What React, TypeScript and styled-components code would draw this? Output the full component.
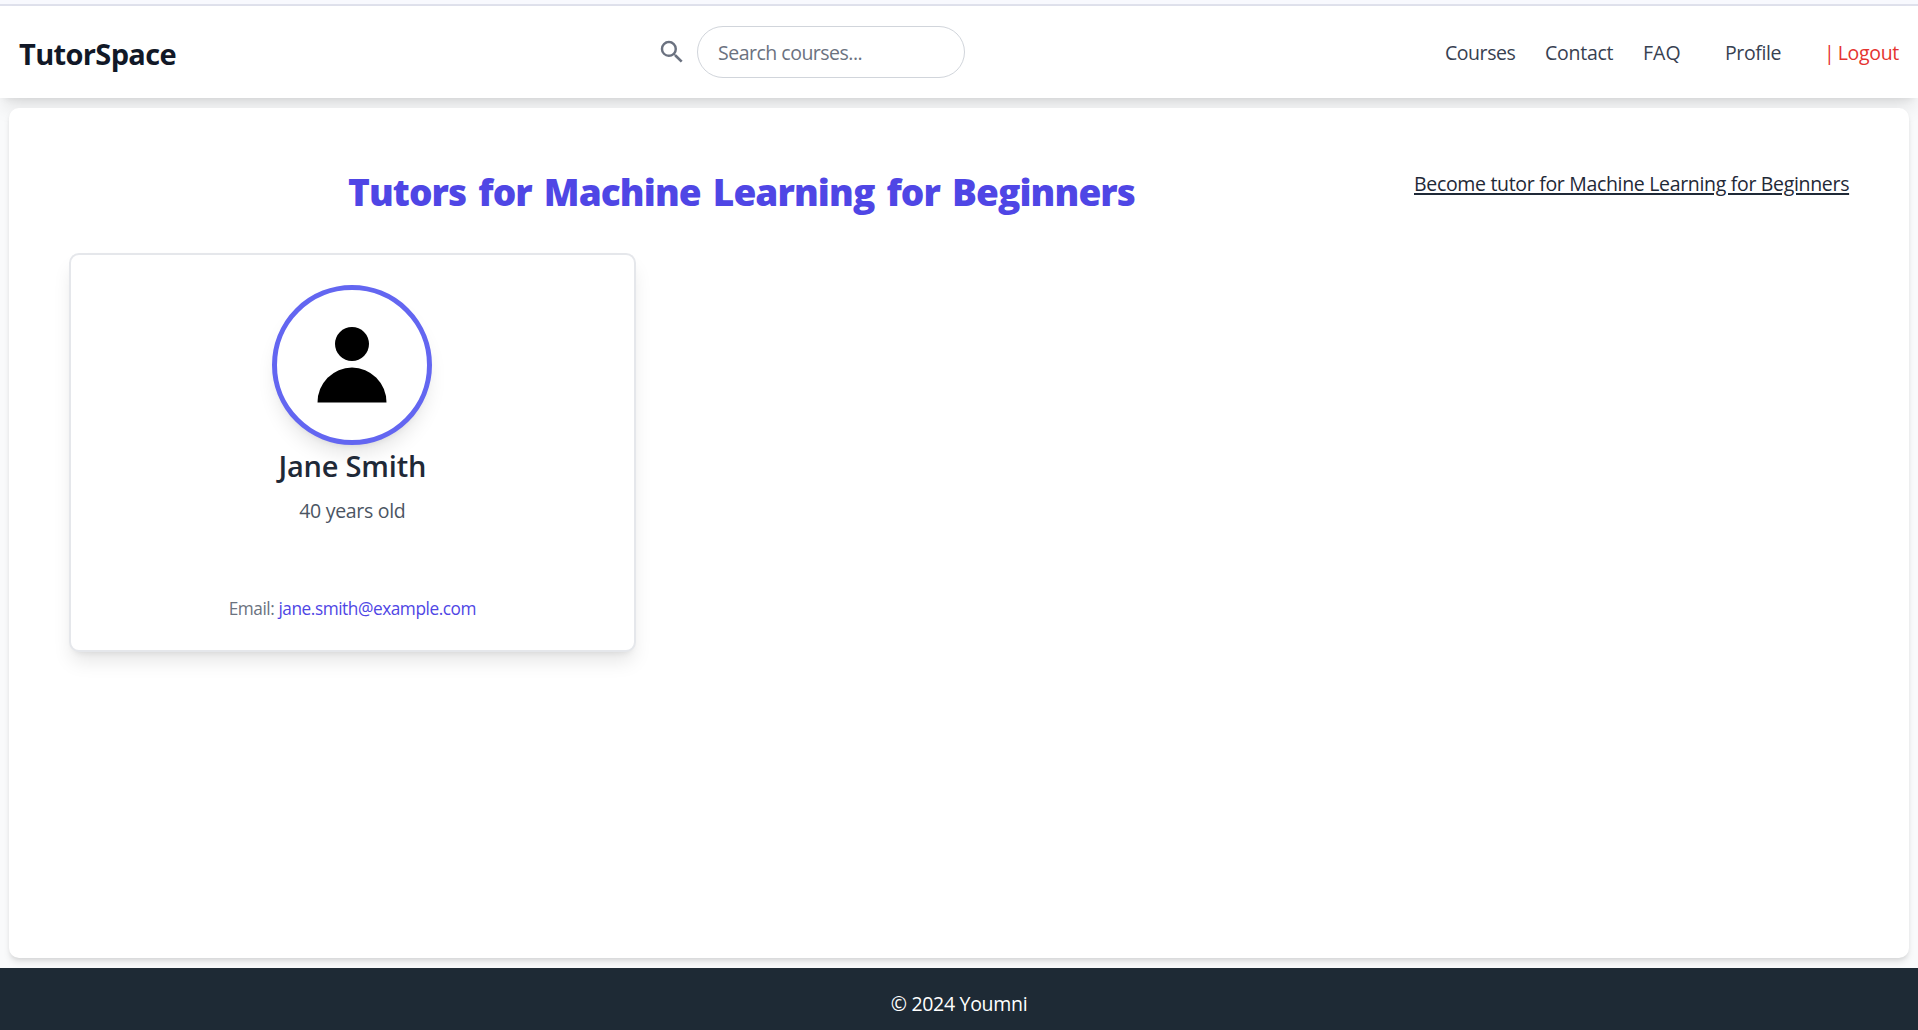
import React from "react";
import styled, { createGlobalStyle } from "styled-components";

const GlobalStyle = createGlobalStyle`
  *, *::before, *::after { box-sizing: border-box; }
  body {
    margin: 0;
    background: #f9fafb;
    font-family: "Open Sans", "Noto Sans", sans-serif;
    font-size: 19.5px;
    line-height: 30px;
    letter-spacing: -0.3px;
    color: #1f2937;
  }
  h1, h2, p { margin: 0; }
  a { color: inherit; text-decoration: none; }
`;

const Page = styled.div`
  display: flex;
  flex-direction: column;
  height: 1030px;
  overflow: hidden;
`;

const TopStrip = styled.div`
  flex: none;
  height: 6px;
  background: #f8f9fe;
  border-bottom: 2px solid #dfe1ec;
`;

const Header = styled.header`
  flex: none;
  display: grid;
  grid-template-columns: 638px 1fr auto;
  align-items: center;
  height: 92px;
  padding: 0 18px 0 19px;
  background: #fff;
  box-shadow: 0 12.5px 18.75px -3.75px rgba(0, 0, 0, 0.1), 0 5px 7.5px -5px rgba(0, 0, 0, 0.1);
`;

const Brand = styled.a`
  padding-top: 3px;
  font-size: 29px;
  font-weight: 700;
  line-height: 40px;
  letter-spacing: -0.65px;
  color: #111827;
`;

const Search = styled.form`
  display: flex;
  align-items: center;
  gap: 10px;
`;

const SearchIcon = styled.svg`
  width: 30px;
  height: 30px;
  fill: #6b7280;
`;

const SearchInput = styled.input`
  width: 268px;
  height: 52px;
  padding: 0 20px;
  border: 1px solid #d1d5db;
  border-radius: 26px;
  background: #fff;
  font: inherit;
  letter-spacing: -0.5px;
  outline: none;
  &::placeholder { color: #6b7280; opacity: 1; }
`;

const Nav = styled.nav`
  display: flex;
  align-items: center;
  padding-top: 2px;
`;

const NavLink = styled.a<{ $width: number; $gap?: number; $danger?: boolean; $spacing?: number }>`
  width: ${(p) => p.$width}px;
  margin-left: ${(p) => p.$gap ?? 0}px;
  white-space: nowrap;
  letter-spacing: ${(p) => p.$spacing ?? -0.3}px;
  word-spacing: ${(p) => (p.$danger ? -1.5 : 0)}px;
  color: ${(p) => (p.$danger ? "#e53430" : "#374151")};
`;

const Main = styled.main`
  flex: 1;
  margin: 10px 9px;
  padding: 60px;
  border-radius: 10px;
  background: #fff;
  box-shadow: 0 5px 7.5px -1.25px rgba(0, 0, 0, 0.1), 0 2.5px 5px -2.5px rgba(0, 0, 0, 0.1);
`;

const TitleRow = styled.div`
  display: flex;
  justify-content: space-between;
  align-items: flex-start;
  height: 85px;
`;

const Title = styled.h1`
  flex: 1;
  text-align: center;
  font-size: 37px;
  font-weight: 800;
  line-height: 48px;
  letter-spacing: -0.9px;
  word-spacing: 3.3px;
  white-space: nowrap;
  color: #4f46e5;
`;

const BecomeLink = styled.a`
  width: 435px;
  padding-top: 1px;
  white-space: nowrap;
  letter-spacing: -0.32px;
  text-decoration: underline;
  text-decoration-thickness: 2px;
  text-underline-offset: 2px;
`;

const Grid = styled.div`
  display: grid;
  grid-template-columns: repeat(3, 1fr);
  gap: 40px;
`;

const Card = styled.article`
  display: flex;
  flex-direction: column;
  align-items: center;
  height: 399px;
  padding: 30px;
  border: 2px solid #e5e7eb;
  border-radius: 10px;
  background: #fff;
  box-shadow: 0 12.5px 18.75px -3.75px rgba(0, 0, 0, 0.1), 0 5px 7.5px -5px rgba(0, 0, 0, 0.1);
`;

const Avatar = styled.div`
  flex: none;
  width: 160px;
  height: 160px;
  border: 5px solid #6366f1;
  border-radius: 50%;
  background: #fff;
  box-shadow: 0 12.5px 18.75px -3.75px rgba(0, 0, 0, 0.1), 0 5px 7.5px -5px rgba(0, 0, 0, 0.1);
  svg { display: block; width: 150px; height: 150px; }
`;

const Name = styled.h2`
  margin-top: 1px;
  font-size: 29px;
  font-weight: 600;
  line-height: 40px;
  letter-spacing: -0.2px;
  color: #1f2937;
`;

const Age = styled.p`
  margin-top: 10px;
  color: #4b5563;
`;

const Email = styled.p`
  margin-top: 70px;
  font-size: 17.25px;
  line-height: 25px;
  letter-spacing: -0.45px;
  color: #6b7280;
  a { color: #4f46e5; }
`;

const Footer = styled.footer`
  flex: none;
  height: 62px;
  padding-top: 21px;
  background: #1e2a35;
  color: #fff;
  text-align: center;
`;

export default function App() {
  return (
    <>
      <GlobalStyle />
      <Page>
        <TopStrip />
        <Header>
          <Brand>TutorSpace</Brand>
          <Search>
            <SearchIcon viewBox="0 0 24 24">
              <path d="M15.5 14h-.79l-.28-.27A6.471 6.471 0 0 0 16 9.5 6.5 6.5 0 1 0 9.5 16c1.61 0 3.09-.59 4.23-1.57l.27.28v.79l5 4.99L20.49 19l-4.99-5zm-6 0C7.01 14 5 11.99 5 9.5S7.01 5 9.5 5 14 7.01 14 9.5 11.99 14 9.5 14z" />
            </SearchIcon>
            <SearchInput placeholder="Search courses..." />
          </Search>
          <Nav>
            <NavLink $width={70} $spacing={-0.45}>Courses</NavLink>
            <NavLink $width={69} $gap={30} $spacing={-0.25}>Contact</NavLink>
            <NavLink $width={38} $gap={29} $spacing={0}>FAQ</NavLink>
            <NavLink $width={57} $gap={44} $spacing={-0.4}>Profile</NavLink>
            <NavLink $width={76} $gap={42} $danger>| Logout</NavLink>
          </Nav>
        </Header>
        <Main>
          <TitleRow>
            <Title>Tutors for Machine Learning for Beginners</Title>
            <BecomeLink>Become tutor for Machine Learning for Beginners</BecomeLink>
          </TitleRow>
          <Grid>
            <Card>
              <Avatar>
                <svg viewBox="0 0 150 150">
                  <circle cx="75" cy="54" r="17" />
                  <path d="M40.5 112.5a34.5 35 0 0 1 69 0z" />
                </svg>
              </Avatar>
              <Name>Jane Smith</Name>
              <Age>40 years old</Age>
              <Email>
                Email: <a>jane.smith@example.com</a>
              </Email>
            </Card>
          </Grid>
        </Main>
        <Footer>© 2024 Youmni</Footer>
      </Page>
    </>
  );
}
